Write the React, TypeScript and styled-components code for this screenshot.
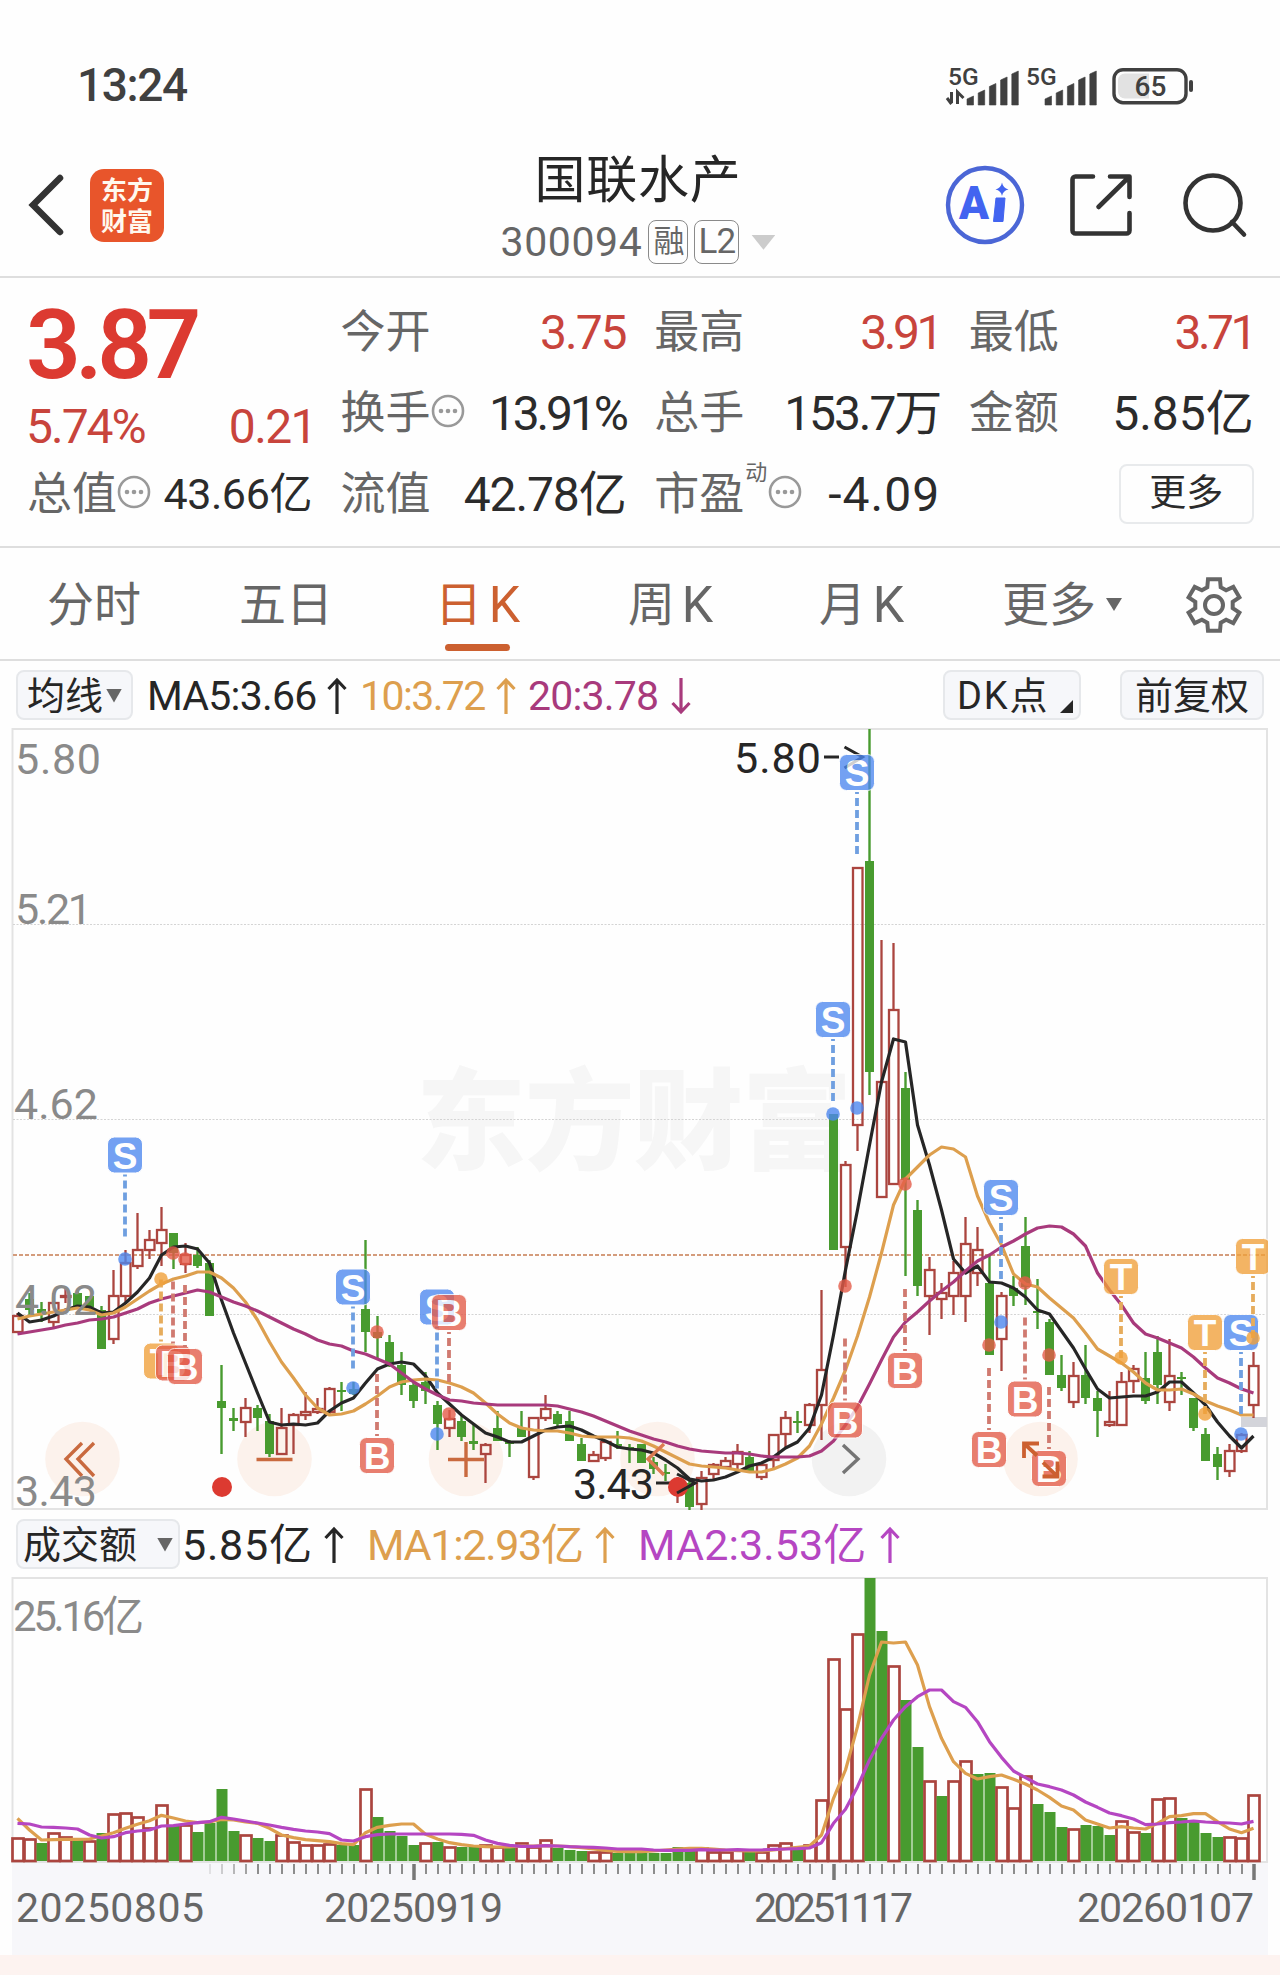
import React from "react";
import styled, { createGlobalStyle } from "styled-components";

const GlobalStyle = createGlobalStyle`
  * { box-sizing: border-box; }
  body { margin: 0; background: #fefefe; }
`;

const LATIN = 'Roboto, "Noto Sans CJK SC", sans-serif';
const INK = "#2b2b2b";
const GREY = "#666666";
const RED = "#c8443c";
const ORANGE = "#dd9f4e";
const MAGENTA = "#a83a7c";
const PURPLE = "#b546c2";
const GREEN = "#489b2f";
const CANDLE_RED = "#ab453f";
const ACCENT = "#cc6030";

const Screen = styled.div`
  width: 1280px;
  height: 1975px;
  display: flex;
  flex-direction: column;
  overflow: hidden;
  background: #fefefe;
  font-family: ${LATIN};
  color: ${INK};
`;

const Txt = styled.span<{ $size: number; $color?: string; $ls?: number; $weight?: number }>`
  display: block;
  white-space: nowrap;
  line-height: 1.2;
  font-size: ${(p) => p.$size}px;
  color: ${(p) => p.$color ?? INK};
  letter-spacing: ${(p) => p.$ls ?? 0}px;
  font-weight: ${(p) => p.$weight ?? 400};
`;

const Icon = styled.svg`
  display: block;
  flex: none;
  overflow: visible;
`;

/* ---------- status bar ---------- */

const StatusBar = styled.div`
  height: 120px;
  padding: 51px 89px 0 77px;
  display: flex;
  justify-content: space-between;
  align-items: center;
`;

const StatusIcons = styled.div`
  display: flex;
  align-items: center;
`;

function Signal({ arrows }: { arrows?: boolean }) {
  return (
    <Icon width="78" height="40" viewBox="0 0 78 40">
      <text x="1" y="18.500" fontSize="24.500" fontWeight="500" fill="#404040" fontFamily={LATIN}>5G</text>
      {arrows && (
        <path d="M4.500 26v11M0 32l4.500 6M10.500 38V26l6 6" fill="none" stroke="#404040" strokeWidth="3" />
      )}
      {[0, 1, 2, 3, 4].map((i) => {
        const x = 20 + i * 11.2;
        const h = [9, 15, 21.5, 28, 34][i];
        return <path key={i} d={`M${x} ${39 - h + 3}l6.5 -3v${h}h-6.5z`} fill="#404040" stroke="#404040" strokeWidth="0.6" />;
      })}
    </Icon>
  );
}

/* ---------- header ---------- */

const Header = styled.header`
  height: 158px;
  padding: 0 34px 0 29px;
  display: grid;
  grid-template-columns: 1fr 280px 1fr;
  border-bottom: 2px solid #dedede;
`;

const HeaderSide = styled.div<{ $end?: boolean }>`
  display: flex;
  align-items: center;
  padding-top: 14px;
  justify-content: ${(p) => (p.$end ? "flex-end" : "flex-start")};
`;

const AppLogo = styled.div`
  width: 74px;
  height: 73px;
  margin-left: 27px;
  padding-bottom: 3px;
  border-radius: 14px;
  background: #e8552b;
  color: #fff8ee;
  font: 700 26px/31px "Noto Sans CJK SC", sans-serif;
  display: flex;
  flex-direction: column;
  align-items: center;
  justify-content: center;
`;

const TitleBlock = styled.div`
  display: flex;
  flex-direction: column;
  align-items: center;
  padding: 30px 0 0 1px;
`;

const CodeRow = styled.div`
  display: flex;
  align-items: center;
  gap: 6px;
  height: 44px;
  margin-top: 9px;
`;

const Badge = styled.span<{ $w: number; $fs: number }>`
  width: ${(p) => p.$w}px;
  height: 44px;
  border: 1.5px solid #8a8a8a;
  border-radius: 8px;
  color: ${GREY};
  font-size: ${(p) => p.$fs}px;
  line-height: 41px;
  letter-spacing: -1px;
  text-align: center;
`;

const Triangle = styled.i<{ $w: number; $h: number; $color: string }>`
  display: block;
  flex: none;
  width: ${(p) => p.$w}px;
  height: ${(p) => p.$h}px;
  background: ${(p) => p.$color};
  clip-path: polygon(0 0, 100% 0, 50% 100%);
`;

/* ---------- quote ---------- */

const Quote = styled.section`
  height: 270px;
  padding: 14px 26px 0 28px;
  display: grid;
  grid-template-columns: 284px 284px 285px 284px;
  grid-template-rows: repeat(3, 81px);
  column-gap: 29.6px;
  border-bottom: 2px solid #dedede;
`;

const PriceBlock = styled.div`
  grid-row: 1 / span 2;
  display: flex;
  flex-direction: column;
`;

const BigPrice = styled.div`
  margin-left: -2px;
  font-size: 96px;
  line-height: 106px;
  font-weight: 600;
  letter-spacing: -5.5px;
  color: #dc3a31;
`;

const ChangeRow = styled.div`
  display: flex;
  justify-content: space-between;
  align-items: center;
  margin: 0 -4px 0 -2px;
`;

const Cell = styled.div`
  display: flex;
  justify-content: space-between;
  align-items: center;
`;

const Label = styled.div`
  display: flex;
  align-items: center;
  margin-left: -1px;
  font-size: 45px;
  line-height: 60px;
  color: ${GREY};
  white-space: nowrap;
`;

const Sup = styled.sup`
  font-size: 22px;
  line-height: 24px;
  align-self: flex-start;
  margin: -4px 1px 0 1px;
`;

const DotsIcon = styled(Icon)`
  margin-bottom: 6px;
`;

const MoreButton = styled.div`
  width: 135px;
  height: 60px;
  margin-left: auto;
  margin-bottom: 2px;
  border: 2px solid #e8eaec;
  border-radius: 8px;
  font-size: 37px;
  line-height: 56px;
  text-align: center;
`;

function Dots() {
  return (
    <DotsIcon width="34" height="34" viewBox="0 0 34 34">
      <circle cx="17" cy="17" r="15" fill="none" stroke="#999" strokeWidth="2.600" />
      {[10, 17, 24].map((x) => (
        <circle key={x} cx={x} cy="17" r="2.300" fill="#999" />
      ))}
    </DotsIcon>
  );
}

const stats: { label: string; value: string; color?: string; size: number; ls: number; dots?: boolean; sup?: string }[] = [
  { label: "今开", value: "3.75", color: RED, size: 48, ls: -2 },
  { label: "最高", value: "3.91", color: RED, size: 48, ls: -3.4 },
  { label: "最低", value: "3.71", color: RED, size: 48, ls: -3.6 },
  { label: "换手", value: "13.91%", size: 48, ls: -3.2, dots: true },
  { label: "总手", value: "153.7万", size: 48, ls: -2.1 },
  { label: "金额", value: "5.85亿", size: 48, ls: 0 },
  { label: "总值", value: "43.66亿", size: 43, ls: -0.4, dots: true },
  { label: "流值", value: "42.78亿", size: 48, ls: -1.1 },
  { label: "市盈", value: "-4.09", size: 48, ls: 1, dots: true, sup: "动" },
];

/* ---------- period tabs ---------- */

const Tabs = styled.nav`
  height: 113px;
  padding: 2px 0 0 47px;
  display: grid;
  grid-template-columns: 192px 196px 193px 191px 183px 184px 56px;
  border-bottom: 2px solid #dedede;
`;

const Tab = styled.div<{ $active?: boolean; $w: number }>`
  width: ${(p) => p.$w}px;
  display: flex;
  align-items: center;
  justify-content: space-between;
  position: relative;
  font-size: 47px;
  line-height: 60px;
  white-space: nowrap;
  color: ${(p) => (p.$active ? ACCENT : GREY)};
  &::after {
    content: "";
    display: ${(p) => (p.$active ? "block" : "none")};
    position: absolute;
    left: 10px;
    bottom: 8px;
    width: 65px;
    height: 7px;
    border-radius: 4px;
    background: ${ACCENT};
  }
`;

const TabK = styled.span`
  font-size: 50px;
  margin-right: -1px;
`;

/* ---------- indicator rows ---------- */

const IndicatorRow = styled.div<{ $h: number; $top: number }>`
  height: ${(p) => p.$h}px;
  padding: ${(p) => p.$top}px 16px 0 16px;
  display: flex;
  align-items: flex-start;
`;

const Picker = styled.div<{ $w: number; $pad: number; $ls?: number }>`
  width: ${(p) => p.$w}px;
  height: 50px;
  flex: none;
  display: flex;
  align-items: center;
  justify-content: space-between;
  padding: 1px ${(p) => p.$pad}px 0;
  border: 2px solid #e6e8eb;
  border-radius: 8px;
  background: #f6f7fa;
  font-size: 38px;
  line-height: 46px;
  letter-spacing: ${(p) => p.$ls ?? 0}px;
  color: #262626;
  white-space: nowrap;
`;

const Reading = styled.div<{ $w: number; $ml: number; $color: string; $size: number; $ls: number }>`
  width: ${(p) => p.$w}px;
  margin-left: ${(p) => p.$ml}px;
  height: 50px;
  flex: none;
  display: flex;
  align-items: center;
  justify-content: space-between;
  padding-top: 1px;
  font-size: ${(p) => p.$size}px;
  letter-spacing: ${(p) => p.$ls}px;
  line-height: 50px;
  color: ${(p) => p.$color};
  white-space: nowrap;
`;

const Spacer = styled.div<{ $w?: number }>`
  flex: ${(p) => (p.$w ? "none" : "1")};
  width: ${(p) => p.$w ?? 0}px;
`;

function Arrow({ down }: { down?: boolean }) {
  return (
    <Icon width="20" height="36" viewBox="0 0 20 36">
      <path
        d={down ? "M10 0v34M1.500 25L10 34l8.500-9" : "M10 36V2M1.500 11L10 2l8.500 9"}
        fill="none"
        stroke="currentColor"
        strokeWidth="3.200"
      />
    </Icon>
  );
}

/* ---------- chart data ---------- */

type Candle = [up: 0 | 1, high: number, top: number, bottom: number, low: number];

const candles: Candle[] = [
  [1, 1313, 1315, 1332, 1332], [0, 1293, 1299, 1310, 1317], [0, 1302, 1309, 1313, 1322], [1, 1293, 1302, 1322, 1327],
  [1, 1287, 1295, 1296, 1303], [0, 1290, 1293, 1307, 1307], [0, 1296, 1296, 1307, 1310], [0, 1306, 1310, 1349, 1349],
  [1, 1270, 1295, 1339, 1344], [1, 1250, 1262, 1296, 1302], [1, 1213, 1249, 1266, 1269], [1, 1230, 1239, 1250, 1259],
  [1, 1207, 1229, 1243, 1266], [0, 1233, 1233, 1253, 1269], [1, 1243, 1254, 1264, 1273], [0, 1247, 1255, 1266, 1268],
  [0, 1260, 1263, 1316, 1316], [0, 1365, 1401, 1408, 1454], [0, 1408, 1418, 1421, 1431], [1, 1398, 1407, 1422, 1437],
  [0, 1405, 1408, 1418, 1431], [0, 1414, 1421, 1454, 1457], [1, 1408, 1427, 1454, 1454], [1, 1413, 1414, 1425, 1454],
  [1, 1392, 1411, 1415, 1420], [1, 1398, 1408, 1412, 1414], [1, 1387, 1388, 1412, 1414], [0, 1382, 1390, 1392, 1411],
  [0, 1382, 1389, 1394, 1395], [0, 1240, 1309, 1332, 1352], [0, 1316, 1332, 1338, 1360], [0, 1335, 1342, 1362, 1367],
  [0, 1352, 1365, 1385, 1395], [0, 1382, 1385, 1401, 1408], [0, 1372, 1382, 1391, 1404], [0, 1401, 1405, 1424, 1450],
  [1, 1410, 1418, 1428, 1437], [0, 1415, 1421, 1437, 1441], [0, 1425, 1441, 1444, 1450], [1, 1443, 1444, 1454, 1483],
  [0, 1411, 1428, 1441, 1441], [0, 1440, 1442, 1444, 1457], [0, 1411, 1428, 1437, 1437], [1, 1417, 1417, 1477, 1480],
  [1, 1395, 1408, 1418, 1421], [0, 1411, 1414, 1424, 1427], [0, 1411, 1421, 1441, 1441], [0, 1438, 1444, 1461, 1461],
  [1, 1451, 1454, 1461, 1461], [1, 1440, 1441, 1458, 1461], [0, 1431, 1444, 1446, 1449], [0, 1444, 1447, 1449, 1463],
  [0, 1444, 1444, 1463, 1463], [0, 1457, 1462, 1469, 1474], [0, 1464, 1472, 1474, 1481], [1, 1477, 1482, 1492, 1503],
  [0, 1480, 1483, 1507, 1510], [1, 1471, 1477, 1504, 1510], [1, 1463, 1464, 1474, 1480], [1, 1457, 1460, 1467, 1468],
  [1, 1444, 1451, 1464, 1472], [0, 1451, 1457, 1472, 1472], [1, 1463, 1464, 1477, 1480], [1, 1434, 1434, 1460, 1469],
  [1, 1411, 1417, 1434, 1447], [0, 1411, 1421, 1423, 1433], [1, 1403, 1404, 1425, 1433], [1, 1290, 1369, 1405, 1440],
  [0, 1114, 1114, 1250, 1250], [1, 1161, 1164, 1247, 1287], [1, 867, 867, 1125, 1151], [0, 729, 861, 1072, 1095],
  [1, 940, 1081, 1197, 1197], [1, 943, 1009, 1184, 1184], [0, 1072, 1088, 1180, 1276], [0, 1200, 1210, 1286, 1296],
  [1, 1257, 1269, 1296, 1335], [1, 1283, 1292, 1299, 1319], [1, 1261, 1272, 1296, 1315], [1, 1217, 1243, 1296, 1322],
  [1, 1227, 1249, 1273, 1286], [0, 1255, 1283, 1355, 1355], [1, 1292, 1295, 1339, 1371], [0, 1276, 1288, 1296, 1306],
  [0, 1217, 1246, 1287, 1305], [0, 1279, 1311, 1313, 1329], [0, 1319, 1322, 1375, 1375], [0, 1355, 1375, 1388, 1391],
  [1, 1362, 1375, 1402, 1408], [0, 1345, 1375, 1398, 1404], [0, 1391, 1398, 1411, 1437], [1, 1391, 1421, 1425, 1427],
  [1, 1372, 1381, 1425, 1425], [1, 1365, 1368, 1381, 1393], [0, 1352, 1378, 1401, 1404], [0, 1336, 1352, 1385, 1404],
  [1, 1339, 1375, 1402, 1411], [0, 1372, 1377, 1379, 1395], [0, 1398, 1398, 1428, 1431], [0, 1428, 1434, 1461, 1461],
  [0, 1447, 1454, 1467, 1480], [1, 1444, 1450, 1471, 1477], [1, 1433, 1434, 1451, 1453], [1, 1352, 1365, 1405, 1418],
];

const ma5 = [
  1313, 1322, 1320, 1316, 1310, 1306, 1307, 1313, 1312, 1303, 1292, 1278, 1255, 1247, 1246, 1249, 1263, 1300, 1333, 1363,
  1393, 1422, 1425, 1424, 1425, 1423, 1411, 1403, 1398, 1383, 1369, 1364, 1362, 1364, 1376, 1393, 1404, 1415, 1424, 1433,
  1437, 1442, 1442, 1436, 1430, 1427, 1426, 1430, 1436, 1441, 1447, 1449, 1450, 1453, 1460, 1468, 1479, 1481, 1480, 1477,
  1472, 1466, 1463, 1457, 1448, 1442, 1428, 1395, 1335, 1270, 1210, 1145, 1082, 1039, 1042, 1125, 1165, 1210, 1259, 1273,
  1266, 1282, 1283, 1288, 1297, 1310, 1314, 1331, 1348, 1369, 1389, 1398, 1397, 1396, 1396, 1392, 1382, 1382, 1393, 1405,
  1422, 1436, 1448, 1436,
];

const ma10 = [
  1319, 1316, 1314, 1312, 1310, 1308, 1310, 1315, 1313, 1307, 1299, 1291, 1284, 1279, 1276, 1272, 1272, 1278, 1288, 1302,
  1320, 1342, 1362, 1378, 1395, 1408, 1415, 1414, 1411, 1404, 1396, 1387, 1382, 1380, 1379, 1380, 1383, 1387, 1393, 1403,
  1414, 1423, 1428, 1430, 1431, 1431, 1433, 1436, 1437, 1437, 1437, 1438, 1441, 1446, 1452, 1458, 1464, 1466, 1467, 1468,
  1470, 1472, 1472, 1469, 1464, 1458, 1446, 1424, 1398, 1370, 1336, 1297, 1253, 1205, 1179, 1167, 1155, 1147, 1149, 1157,
  1196, 1223, 1245, 1274, 1284, 1287, 1298, 1308, 1318, 1333, 1349, 1356, 1363, 1372, 1383, 1390, 1390, 1389, 1394, 1401,
  1406, 1410, 1415, 1415,
];

const ma20 = [
  1334, 1332, 1330, 1328, 1325, 1323, 1320, 1319, 1317, 1313, 1309, 1303, 1299, 1296, 1293, 1290, 1292, 1297, 1302, 1306,
  1311, 1317, 1323, 1329, 1334, 1340, 1344, 1346, 1351, 1354, 1359, 1364, 1373, 1382, 1389, 1395, 1400, 1401, 1403, 1404,
  1405, 1405, 1405, 1405, 1405, 1406, 1409, 1412, 1416, 1421, 1426, 1431, 1435, 1439, 1442, 1446, 1449, 1451, 1452, 1453,
  1453, 1454, 1456, 1457, 1457, 1457, 1456, 1451, 1441, 1425, 1407, 1384, 1360, 1337, 1322, 1312, 1301, 1291, 1282, 1271,
  1261, 1255, 1247, 1241, 1234, 1228, 1226, 1227, 1234, 1246, 1273, 1290, 1305, 1323, 1334, 1338, 1343, 1348, 1357, 1368,
  1378, 1383, 1389, 1393,
];

const volumeTops = [
  1838, 1839, 1843, 1833, 1837, 1840, 1841, 1833, 1814, 1813, 1817, 1828, 1805, 1826, 1825, 1832, 1823, 1789, 1831, 1835,
  1838, 1841, 1835, 1842, 1845, 1845, 1844, 1845, 1845, 1789, 1817, 1831, 1836, 1845, 1843, 1842, 1847, 1847, 1847, 1845,
  1847, 1846, 1843, 1847, 1840, 1848, 1850, 1851, 1852, 1852, 1853, 1853, 1853, 1853, 1853, 1847, 1848, 1848, 1852, 1852,
  1850, 1851, 1852, 1845, 1843, 1849, 1845, 1800, 1659, 1709, 1634, 1578, 1631, 1666, 1700, 1747, 1781, 1796, 1781, 1761,
  1774, 1773, 1787, 1808, 1776, 1804, 1812, 1827, 1829, 1825, 1826, 1835, 1821, 1832, 1833, 1799, 1798, 1818, 1822, 1833,
  1837, 1837, 1838, 1795,
];

const volumeUp = new Set([
  0, 1, 3, 4, 6, 8, 9, 10, 11, 12, 14, 19, 22, 23, 24, 25, 26, 29, 34, 36, 39, 40, 42, 43, 44, 48, 49, 57, 58, 59, 60,
  62, 63, 64, 66, 67, 68, 69, 70, 73, 76, 78, 79, 82, 83, 84, 88, 92, 93, 95, 96, 101, 102, 103,
]);

/* moving averages of turnover, three units per pixel from y = 1500 */
const volMa1 = [
  955, 990, 1020, 1019, 1018, 1018, 1017, 1008, 998, 985, 973, 962, 946, 954, 963, 968, 966, 958, 960, 966, 970, 985,
  1005, 1013, 1019, 1022, 1025, 1031, 1034, 998, 982, 976, 972, 972, 1003, 1017, 1028, 1034, 1038, 1040, 1041, 1041,
  1038, 1038, 1037, 1038, 1040, 1043, 1047, 1051, 1054, 1055, 1055, 1053, 1050, 1047, 1045, 1045, 1047, 1050, 1052,
  1053, 1053, 1050, 1046, 1042, 1038, 1005, 895, 810, 680, 525, 426, 429, 426, 495, 620, 715, 785, 820, 837, 830, 825,
  838, 852, 870, 892, 918, 930, 960, 972, 984, 980, 984, 987, 970, 950, 947, 941, 941, 965, 987, 998, 985,
];

const volMa2 = [
  970, 972, 981, 982, 984, 987, 1005, 1014, 1010, 998, 993, 990, 978, 977, 972, 968, 965, 952, 957, 963, 969, 975, 982,
  988, 993, 996, 1001, 1020, 1023, 1010, 1004, 1002, 1002, 1002, 1002, 1002, 1002, 1003, 1006, 1020, 1030, 1036, 1039,
  1039, 1037, 1038, 1040, 1041, 1042, 1044, 1047, 1047, 1047, 1050, 1051, 1051, 1051, 1049, 1050, 1050, 1049, 1050,
  1050, 1048, 1047, 1046, 1044, 1028, 970, 928, 860, 780, 715, 660, 620, 590, 570, 570, 605, 622, 665, 725, 772, 813,
  833, 852, 860, 870, 885, 906, 922, 939, 947, 957, 974, 972, 968, 966, 963, 966, 968, 969, 972, 964,
];

type Mark = { kind: "S" | "B" | "T"; x: number; y: number; dot: number };

const marks: Mark[] = [
  { kind: "S", x: 125, y: 1155, dot: 1259 },
  { kind: "T", x: 161, y: 1361, dot: 1279 },
  { kind: "B", x: 173, y: 1363, dot: 1253 },
  { kind: "B", x: 185, y: 1366.5, dot: 1259 },
  { kind: "S", x: 353, y: 1287, dot: 1388 },
  { kind: "B", x: 377, y: 1455.5, dot: 1332 },
  { kind: "S", x: 437, y: 1307, dot: 1434 },
  { kind: "B", x: 449, y: 1312.5, dot: 1414 },
  { kind: "S", x: 833, y: 1019.5, dot: 1114 },
  { kind: "S", x: 857, y: 772.5, dot: 1108 },
  { kind: "B", x: 905, y: 1370.5, dot: 1184 },
  { kind: "B", x: 845, y: 1420, dot: 1286 },
  { kind: "S", x: 1001, y: 1197.5, dot: 1322 },
  { kind: "B", x: 1025, y: 1399, dot: 1283 },
  { kind: "B", x: 989, y: 1449.5, dot: 1345 },
  { kind: "B", x: 1049, y: 1468.5, dot: 1355 },
  { kind: "T", x: 1121, y: 1276.5, dot: 1358 },
  { kind: "T", x: 1205, y: 1332.5, dot: 1414 },
  { kind: "S", x: 1241, y: 1332.5, dot: 1434 },
  { kind: "T", x: 1253, y: 1256.5, dot: 1338 },
];

const markFill = { S: "#4d87ef", B: "#e35b48", T: "#f0a03a" };
const markDash = { S: "#6f9fe0", B: "#d07a70", T: "#e6ac5c" };

const xAt = (i: number) => 17.5 + i * 12;
const line = (ys: number[]) => ys.map((y, i) => `${i ? "L" : "M"}${xAt(i)} ${y}`).join("");

const ChartSvg = styled.svg`
  display: block;
  width: 1280px;
  flex: none;
`;

function CandleShape({ c, i }: { c: Candle; i: number }) {
  const [up, high, top, bottom, low] = c;
  const x = xAt(i);
  if (!up)
    return (
      <g fill={GREEN}>
        <rect x={x - 1.2} y={high} width={2.4} height={low - high} />
        <rect x={x - 4.5} y={top} width={9} height={bottom - top} />
      </g>
    );
  return (
    <g stroke={CANDLE_RED} strokeWidth={2.3} fill="none">
      <path d={`M${x} ${high}V${top}M${x} ${bottom}V${low}`} />
      <rect x={x - 4.5} y={top + 1} width={9.5} height={Math.max(1, bottom - top - 1)} />
    </g>
  );
}

function MarkShape({ m }: { m: Mark }) {
  const up = m.kind !== "S" && m.y > m.dot;
  const y1 = up ? m.y - 81.5 : m.y + 19.5;
  return (
    <g>
      <path
        d={`M${m.x} ${y1}v62`}
        stroke={markDash[m.kind]}
        strokeWidth={3.8}
        strokeDasharray="8 4"
        strokeDashoffset={up ? 0 : 6}
        fill="none"
      />
      <circle cx={m.x} cy={m.dot} r={6.8} fill={markFill[m.kind]} opacity={0.8} />
      <g opacity={0.78}>
        <rect x={m.x - 17.5} y={m.y - 18} width={35} height={36} rx={7} fill={markFill[m.kind]} stroke="#fff" strokeWidth={1} />
        <text x={m.x} y={m.y + 13.5} fontSize={37} fontWeight={700} fill="#fff" textAnchor="middle" fontFamily={'"Liberation Sans", sans-serif'}>
          {m.kind}
        </text>
      </g>
    </g>
  );
}

function PriceChart() {
  return (
    <ChartSvg height={784} viewBox="0 728 1280 784">
      <defs>
        <clipPath id="plot">
          <rect x="12" y="728" width="1256" height="784" />
        </clipPath>
      </defs>
      <text x="416" y="1161" fontSize="110" fontWeight="900" fill="#f6f6f6" textLength="436" fontFamily={'"Noto Sans CJK SC", sans-serif'}>
        东方财富
      </text>
      <rect x="12.500" y="729" width="1254.500" height="780" fill="none" stroke="#e3e3e3" strokeWidth="2" />
      {[924.5, 1119.5, 1314.5].map((y) => (
        <path key={y} d={`M13 ${y}H1266`} stroke="#d4d4d4" strokeWidth="1" strokeDasharray="2 1.500" />
      ))}
      {[82.5, 274.5, 466, 657.5, 849, 1040.5].map((x) => (
        <circle key={x} cx={x} cy="1459" r="37.300" fill={x === 849 ? "#f2f2f2" : "#fcf2ec"} />
      ))}
      <rect x="1241" y="1417" width="26" height="10" fill="#d3d4da" />
      <path d="M13 1255H1267" stroke="#d49c7c" strokeWidth="2" strokeDasharray="4 2" />
      <g clipPath="url(#plot)">
        {candles.map((c, i) => (
          <CandleShape key={i} c={c} i={i} />
        ))}
        <g fill="none" strokeWidth="3.200" strokeLinejoin="round">
          <path d={line(ma5)} stroke="#262626" />
          <path d={line(ma10)} stroke={ORANGE} />
          <path d={line(ma20)} stroke={MAGENTA} />
        </g>
      </g>
      <g fontSize="43" fill="#262626" fontFamily={LATIN}>
        <text x="734" y="773" textLength="87">5.80</text>
        <text x="573" y="1499" textLength="81">3.43</text>
      </g>
      <g fill="none" stroke="#262626" strokeWidth="3">
        <path d="M824 757h15M844.500 747l18 10-18 11" />
        <path d="M656 1483h16M677 1474l18 9-18 10" />
      </g>
      <circle cx="222" cy="1487" r="10" fill="#dc3a31" />
      <circle cx="678" cy="1487" r="10" fill="#dc3a31" />
      <path d="M677 1493l18-10" stroke="#262626" strokeWidth="3" />
      <g clipPath="url(#plot)">
        {marks.map((m, i) => (
          <MarkShape key={i} m={m} />
        ))}
      </g>
      <g fill="none" stroke="#c96a3f" strokeWidth="3.400">
        <path d="M82 1443l-16 16 16 17M94 1443l-16 16 16 17" />
        <path d="M256.500 1459.500h36" />
        <path d="M448 1459.500h36M466 1442v35" />
        <path d="M664 1444l-16 15 16 16" stroke="#dc7a50" />
        <path d="M1024 1458v-14.500h15M1024 1443.500l13 12M1042.500 1476.500h15v-15M1057.500 1476.500l-14.500-14" stroke={ACCENT} strokeWidth="3.800" />
        <path d="M843 1445l15 14-15 14" stroke="#757575" />
      </g>
      <g fontSize="43" fill="#8a8a8a" fontFamily={LATIN}>
        <text x="15" y="774" textLength="86">5.80</text>
        <text x="15" y="924" textLength="77">5.21</text>
        <text x="14" y="1119" textLength="84">4.62</text>
        <text x="15" y="1315" textLength="82">4.02</text>
        <text x="15" y="1506" textLength="82">3.43</text>
      </g>
    </ChartSvg>
  );
}

const dates = [
  { text: "20250805", x: 16, w: 188 },
  { text: "20250919", x: 324, w: 179 },
  { text: "20251117", x: 754, w: 159 },
  { text: "20260107", x: 1077, w: 177 },
];

function VolumeChart() {
  const ticks = Array.from({ length: 88 }, (_, k) => k + 16);
  return (
    <ChartSvg height={379} viewBox="0 1576 1280 379">
      <rect x="12" y="1863" width="1256" height="92" fill="#f7f7fa" />
      <rect x="12.500" y="1578" width="1254.500" height="284" fill="none" stroke="#e3e3e3" strokeWidth="2" />
      {volumeTops.map((top, i) => {
        const x = xAt(i);
        return volumeUp.has(i) ? (
          <rect key={i} x={x - 5} y={top + 0.5} width={11} height={1860.5 - top} fill="#fff" stroke={CANDLE_RED} strokeWidth={2.7} />
        ) : (
          <rect key={i} x={x - 5} y={top} width={11} height={1861 - top} fill={GREEN} />
        );
      })}
      <g fill="none" strokeWidth="3.200" strokeLinejoin="round">
        <path d={line(volMa1.map((v) => 1500 + v / 3))} stroke={ORANGE} />
        <path d={line(volMa2.map((v) => 1500 + v / 3))} stroke={PURPLE} />
      </g>
      <text x="13" y="1631" fontSize="42" fill="#8a8a8a" textLength="131" fontFamily={LATIN}>25.16亿</text>
      {ticks.map((i) => {
        const major = i === 33 || i === 68 || i === 103;
        return (
          <path
            key={i}
            d={`M${xAt(i) + 0.5} 1864v${major ? 16 : 10}`}
            stroke={major ? "#777" : "#8d8d8d"}
            strokeWidth={major ? 3.5 : 2}
            opacity={Math.min(1, (i - 15) / 5)}
          />
        );
      })}
      <g fontSize="41" fill={GREY} fontFamily={LATIN}>
        {dates.map((d) => (
          <text key={d.text} x={d.x} y="1921.500" textLength={d.w}>
            {d.text}
          </text>
        ))}
      </g>
    </ChartSvg>
  );
}

const BottomStrip = styled.div`
  flex: 1;
  background: #fdf3f0;
`;

/* ---------- header icons ---------- */

function gearPath() {
  const pts: string[] = [];
  for (let k = 0; k < 6; k++) {
    const a = (k * Math.PI) / 3 - Math.PI / 2;
    for (const [da, r] of [[-0.36, 19], [-0.23, 26.5], [0.23, 26.5], [0.36, 19]]) {
      pts.push(`${(28 + r * Math.cos(a + da)).toFixed(1)} ${(28 + r * Math.sin(a + da)).toFixed(1)}`);
    }
  }
  return `M${pts.join("L")}Z`;
}

export default function App() {
  return (
    <>
      <GlobalStyle />
      <Screen>
        <StatusBar>
          <Txt $size={46} $weight={500} $color="#404040" $ls={-1.4}>13:24</Txt>
          <StatusIcons>
            <Signal arrows />
            <Signal />
            <Icon width="88" height="36" viewBox="0 0 88 36">
              <rect x="11" y="1.700" width="72" height="33" rx="9" fill="none" stroke="#404040" strokeWidth="3.400" />
              <path d="M22 5.500H46V30.500H22a7 7 0 0 1-7-7v-11a7 7 0 0 1 7-7z" fill="#e2e2e2" />
              <rect x="86" y="12" width="4" height="12" rx="2" fill="#404040" />
              <text x="47.500" y="28" textAnchor="middle" fontSize="28" fontWeight="500" fill="#404040" fontFamily={LATIN}>65</text>
            </Icon>
          </StatusIcons>
        </StatusBar>

        <Header>
          <HeaderSide>
            <Icon width="34" height="60" viewBox="0 0 34 60">
              <path d="M31 3L4 30l27 27" fill="none" stroke="#333" strokeWidth="6.500" strokeLinecap="round" />
            </Icon>
            <AppLogo>
              <span>东方</span>
              <span>财富</span>
            </AppLogo>
          </HeaderSide>
          <TitleBlock>
            <Txt $size={51} $color="#262626" $ls={0.8}>国联水产</Txt>
            <CodeRow>
              <Txt $size={41} $color={GREY} $ls={0.6}>300094</Txt>
              <Badge $w={40} $fs={31}>融</Badge>
              <Badge $w={45} $fs={35}>L2</Badge>
              <Spacer $w={0.1} />
              <Triangle $w={24} $h={15} $color="#cccccc" />
            </CodeRow>
          </TitleBlock>
          <HeaderSide $end>
            <Icon width="80" height="80" viewBox="0 0 80 80">
              <circle cx="40" cy="40" r="37" fill="none" stroke="#4b66d6" strokeWidth="4.400" />
              <text x="14" y="54" fontSize="46" fontWeight="900" fill="#4264f0" textLength="30" lengthAdjust="spacingAndGlyphs" fontFamily={LATIN}>A</text>
              <path d="M51 33h9l-2 23.500h-9.500z" fill="#4264f0" stroke="#4264f0" strokeLinejoin="round" />
              <path d="M57 17.500q1 5.500 6.500 7-5.500 1-6.500 6.500-1-5.500-6.500-6.500 5.500-1.500 6.500-7z" fill="#4264f0" />
            </Icon>
            <Spacer $w={45} />
            <Icon width="62" height="62" viewBox="0 0 62 62">
              <path
                d="M23 2.500H5.500a3 3 0 0 0-3 3v51a3 3 0 0 0 3 3h51a3 3 0 0 0 3-3V39M40 2.500h19.500V23M59 3L28.500 33"
                fill="none"
                stroke="#333"
                strokeWidth="4.600"
                strokeLinecap="round"
                strokeLinejoin="round"
              />
            </Icon>
            <Spacer $w={51} />
            <Icon width="63" height="64" viewBox="0 0 63 64">
              <circle cx="30" cy="30" r="27.500" fill="none" stroke="#333" strokeWidth="4.600" />
              <path d="M49 49l12 12.500" stroke="#333" strokeWidth="4.600" strokeLinecap="round" />
            </Icon>
          </HeaderSide>
        </Header>

        <Quote>
          <PriceBlock>
            <BigPrice>3.87</BigPrice>
            <ChangeRow>
              <Txt $size={48} $color={RED} $ls={-2}>5.74%</Txt>
              <Txt $size={48} $color={RED} $ls={-1.6}>0.21</Txt>
            </ChangeRow>
          </PriceBlock>
          {stats.map((s) => (
            <Cell key={s.label}>
              <Label>
                {s.label}
                {s.sup && <Sup>{s.sup}</Sup>}
                {s.dots && <Dots />}
              </Label>
              <Txt $size={s.size} $color={s.color} $ls={s.ls}>{s.value}</Txt>
            </Cell>
          ))}
          <Cell>
            <MoreButton>更多</MoreButton>
          </Cell>
        </Quote>

        <Tabs>
          <Tab $w={93}>分时</Tab>
          <Tab $w={93}>五日</Tab>
          <Tab $w={84} $active><span>日</span><TabK>K</TabK></Tab>
          <Tab $w={84}><span>周</span><TabK>K</TabK></Tab>
          <Tab $w={84}><span>月</span><TabK>K</TabK></Tab>
          <Tab $w={120}>
            更多
            <Triangle $w={16} $h={13} $color={GREY} />
          </Tab>
          <Tab $w={56}>
            <Icon width="56" height="56" viewBox="0 0 56 56">
              <path d={gearPath()} fill="none" stroke={GREY} strokeWidth="4" />
              <circle cx="28" cy="28" r="9" fill="none" stroke={GREY} strokeWidth="4" />
            </Icon>
          </Tab>
        </Tabs>

        <IndicatorRow $h={67} $top={9}>
          <Picker $w={117} $pad={9}>
            均线
            <Triangle $w={16} $h={14} $color={GREY} />
          </Picker>
          <Reading $w={200} $ml={14} $color="#262626" $size={41} $ls={-0.8}>MA5:3.66<Arrow /></Reading>
          <Reading $w={156} $ml={13} $color={ORANGE} $size={41} $ls={-1.6}>10:3.72<Arrow /></Reading>
          <Reading $w={163} $ml={12} $color={MAGENTA} $size={41} $ls={-0.8}>20:3.78<Arrow down /></Reading>
          <Spacer />
          <Picker $w={138} $pad={12} $ls={1.8}>
            DK点
            <Icon width="13" height="13" viewBox="0 0 13 13">
              <path d="M13 0v13H0z" fill="#262626" transform="translate(6 11)" />
            </Icon>
          </Picker>
          <Spacer $w={39} />
          <Picker $w={144} $pad={13}>前复权</Picker>
        </IndicatorRow>

        <PriceChart />

        <IndicatorRow $h={64} $top={7}>
          <Picker $w={164} $pad={5}>
            成交额
            <Triangle $w={16} $h={14} $color={GREY} />
          </Picker>
          <Reading $w={162} $ml={2} $color="#262626" $size={43} $ls={0.8}>5.85亿<Arrow /></Reading>
          <Reading $w={248} $ml={23} $color={ORANGE} $size={43} $ls={-1.3}>MA1:2.93亿<Arrow /></Reading>
          <Reading $w={262} $ml={23} $color={PURPLE} $size={43} $ls={0.1}>MA2:3.53亿<Arrow /></Reading>
        </IndicatorRow>

        <VolumeChart />
        <BottomStrip />
      </Screen>
    </>
  );
}
